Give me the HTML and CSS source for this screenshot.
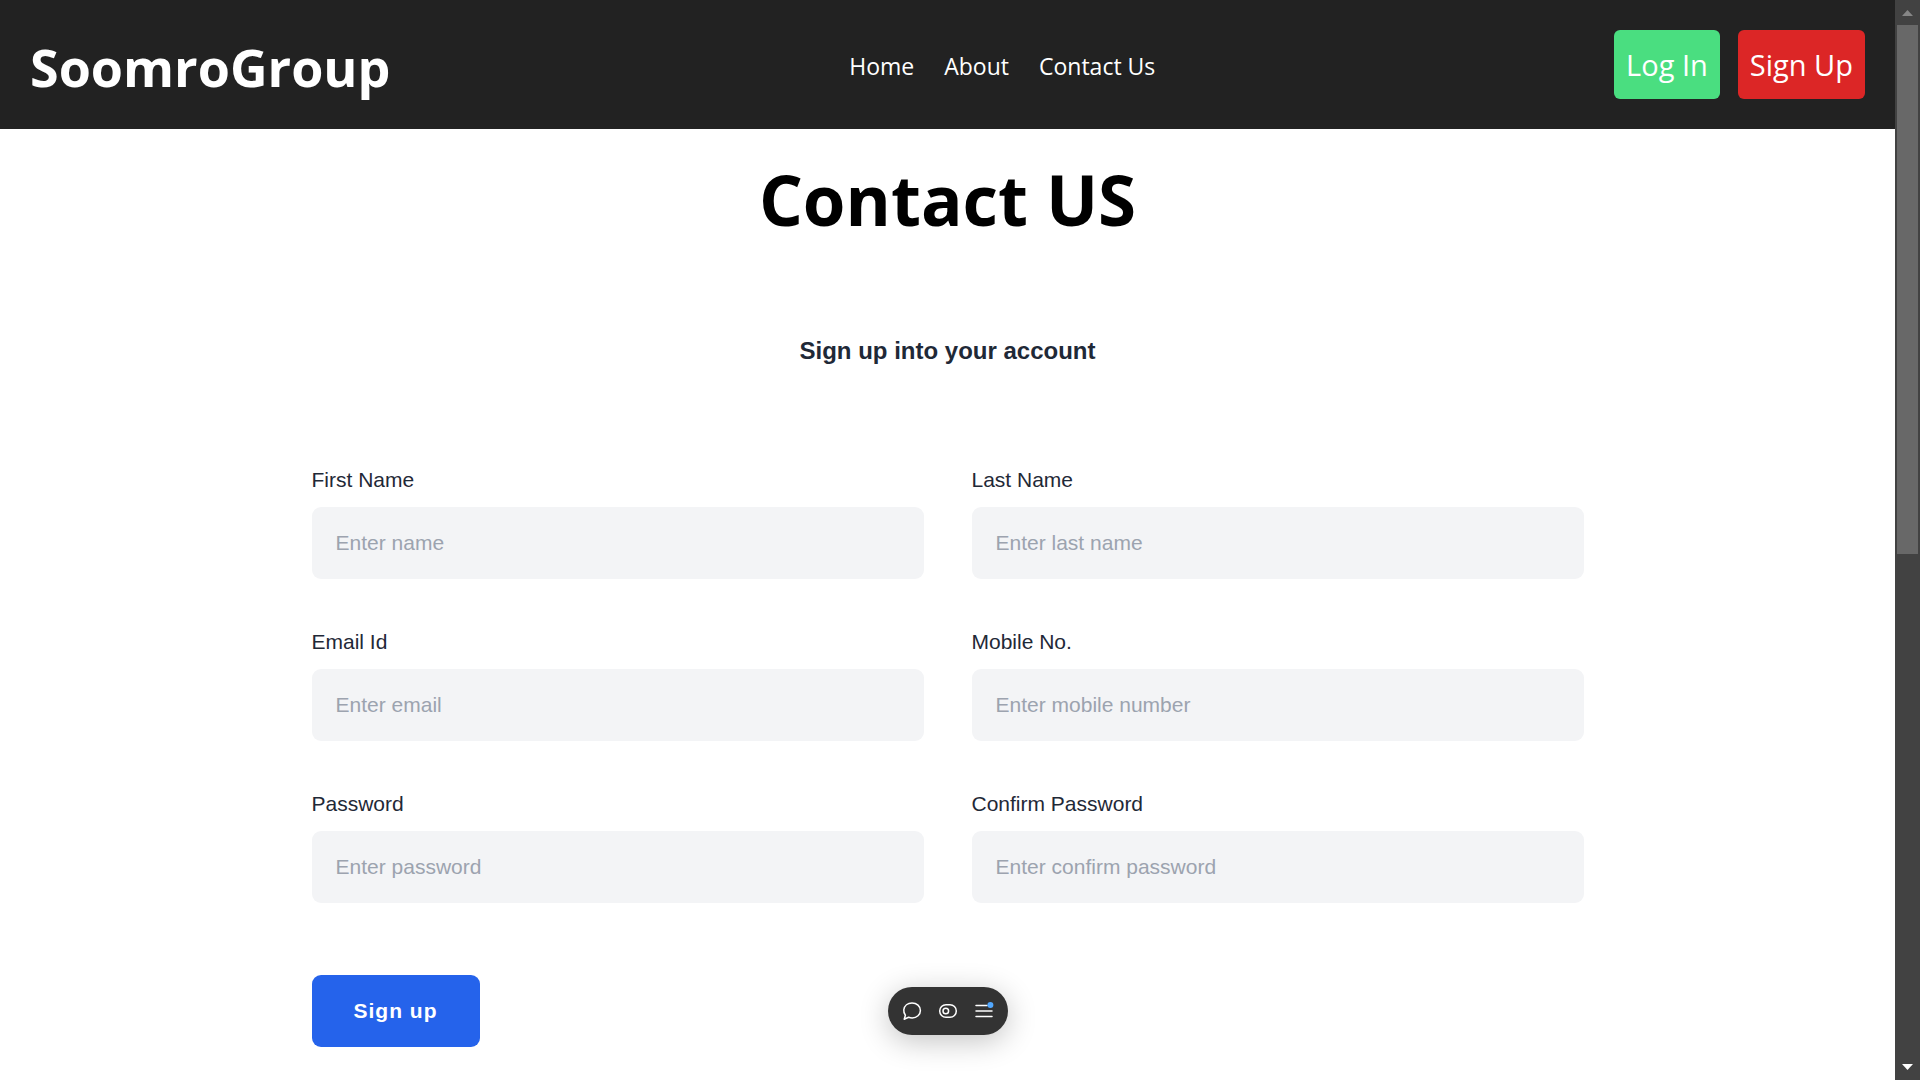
FILE: index.html
```html
<!DOCTYPE html>
<html lang="en">
<head>
<meta charset="utf-8">
<meta name="viewport" content="width=device-width, initial-scale=1">
<title>SoomroGroup</title>
<link rel="stylesheet" href="styles.css">
</head>
<body>
<div class="page">
  <header class="navbar">
    <div class="brand">SoomroGroup</div>
    <nav class="links">
      <a href="#">Home</a>
      <a href="#">About</a>
      <a href="#">Contact Us</a>
    </nav>
    <div class="actions">
      <button class="action login" type="button">Log In</button>
      <button class="action signup" type="button">Sign Up</button>
    </div>
  </header>
  <main class="contact">
    <h1 class="title">Contact US</h1>
    <h2 class="subtitle">Sign up into your account</h2>
    <form class="form">
      <div class="field">
        <label for="first">First Name</label>
        <input id="first" type="text" placeholder="Enter name">
      </div>
      <div class="field">
        <label for="last">Last Name</label>
        <input id="last" type="text" placeholder="Enter last name">
      </div>
      <div class="field">
        <label for="email">Email Id</label>
        <input id="email" type="email" placeholder="Enter email">
      </div>
      <div class="field">
        <label for="mobile">Mobile No.</label>
        <input id="mobile" type="tel" placeholder="Enter mobile number">
      </div>
      <div class="field">
        <label for="password">Password</label>
        <input id="password" type="password" placeholder="Enter password">
      </div>
      <div class="field">
        <label for="confirm">Confirm Password</label>
        <input id="confirm" type="password" placeholder="Enter confirm password">
      </div>
      <button class="submit" type="button">Sign up</button>
    </form>
  </main>
  <div class="toolbar">
    <button type="button" aria-label="Comment">
      <svg viewBox="0 0 24 24"><path d="M4.2 20.2 L5.4 16.2 C4 14.5 3.6 12.8 3.8 10.8 C4.3 6.6 7.8 3.9 12 3.9 C16.8 3.9 20.4 7.2 20.4 11.4 C20.4 15.7 16.8 19 12.2 19 C10.7 19 9.6 18.7 8.6 18.3 Z"/></svg>
    </button>
    <button type="button" aria-label="Draft mode">
      <svg viewBox="0 0 24 24"><rect x="3.7" y="5.7" width="16.6" height="12.6" rx="6.3"/><circle cx="9.8" cy="12" r="2.8"/></svg>
    </button>
    <button type="button" aria-label="Menu">
      <svg viewBox="0 0 24 24"><path d="M4 6.5H15M4 12H20M4 17.5H20"/><circle class="dot" cx="18.4" cy="6" r="3"/></svg>
    </button>
  </div>
</div>
<div class="scrollbar" aria-hidden="true">
  <svg class="arrow up" viewBox="0 0 25 25"><path d="M7 16 L12.500 10 L18 16Z"/></svg>
  <div class="track"><div class="thumb"></div></div>
  <svg class="arrow down" viewBox="0 0 25 25"><path d="M7 9 L12.500 15 L18 9Z"/></svg>
</div>
</body>
</html>
```
FILE: styles.css
```css
* {
  box-sizing: border-box;
}

body {
  margin: 0;
  display: flex;
  min-height: 100vh;
  background: #fff;
  color: #000;
  font-family: "Open Sans", sans-serif;
}

.page {
  flex: 1;
  min-width: 0;
}

.navbar {
  display: flex;
  align-items: center;
  justify-content: space-between;
  padding: 30px;
  background: #222;
  color: #fff;
}

.brand {
  padding-top: 4px;
  font-size: 52px;
  font-weight: 700;
  line-height: 60px;
}

.links {
  display: flex;
  gap: 30px;
  padding-top: 2px;
  font-size: 23px;
  line-height: 36px;
}

.links a {
  color: inherit;
  text-decoration: none;
}

.actions {
  display: flex;
  gap: 18px;
}

.action {
  padding: 12px;
  border: 0;
  border-radius: 6px;
  color: #fff;
  font: 400 29px/45px "Open Sans", sans-serif;
}

.login {
  background: #4ade80;
}

.signup {
  background: #dc2626;
}

.contact {
  max-width: 1272px;
  margin: 0 auto;
  padding: 36px 0;
}

.title {
  margin: 0;
  font-size: 69px;
  font-weight: 700;
  line-height: 68px;
  text-align: center;
}

.subtitle {
  margin: 100px 0 96px;
  color: #1f2937;
  font: 700 24px/36px "Liberation Sans", sans-serif;
  text-align: center;
}

.form {
  display: grid;
  grid-template-columns: 1fr 1fr;
  gap: 48px;
  color: #1f2937;
  font: 400 21px/30px "Liberation Sans", sans-serif;
}

.field {
  display: flex;
  flex-direction: column;
  gap: 12px;
}

.field input {
  height: 72px;
  padding: 0 24px;
  border: 0;
  border-radius: 9px;
  background: #f3f4f6;
  color: inherit;
  font: inherit;
}

.field input::placeholder {
  color: #9ca3af;
  opacity: 1;
}

.submit {
  justify-self: start;
  height: 72px;
  margin-top: 24px;
  padding: 0 42px;
  border: 0;
  border-radius: 9px;
  background: #2563eb;
  color: #fff;
  font: 700 21px/30px "Liberation Sans", sans-serif;
  letter-spacing: 1px;
}

/* Floating toolbar, centred over the page area beside the scrollbar */
.toolbar {
  position: fixed;
  bottom: 45px;
  left: calc((100% - 25px) / 2);
  transform: translateX(-50%);
  display: flex;
  align-items: center;
  gap: 12px;
  padding: 12px;
  border-radius: 24px;
  background: #333;
  box-shadow: 0 6px 30px rgba(0, 0, 0, 0.24);
}

.toolbar button {
  width: 24px;
  height: 24px;
  padding: 0;
  border: 0;
  background: none;
}

.toolbar svg {
  display: block;
  width: 24px;
  height: 24px;
  fill: none;
  stroke: #fff;
  stroke-width: 1.5;
  stroke-linecap: round;
  stroke-linejoin: round;
}

.toolbar .dot {
  fill: #52a8ff;
  stroke: none;
}

.scrollbar {
  position: sticky;
  top: 0;
  display: flex;
  flex-direction: column;
  width: 25px;
  height: 100vh;
  background: #424242;
}

.arrow {
  width: 25px;
  height: 25px;
}

.up {
  fill: #868686;
}

.down {
  fill: #fff;
}

.track {
  flex: 1;
  padding: 0 2px;
}

.thumb {
  height: 51.4%;
  background: #686868;
}
```
